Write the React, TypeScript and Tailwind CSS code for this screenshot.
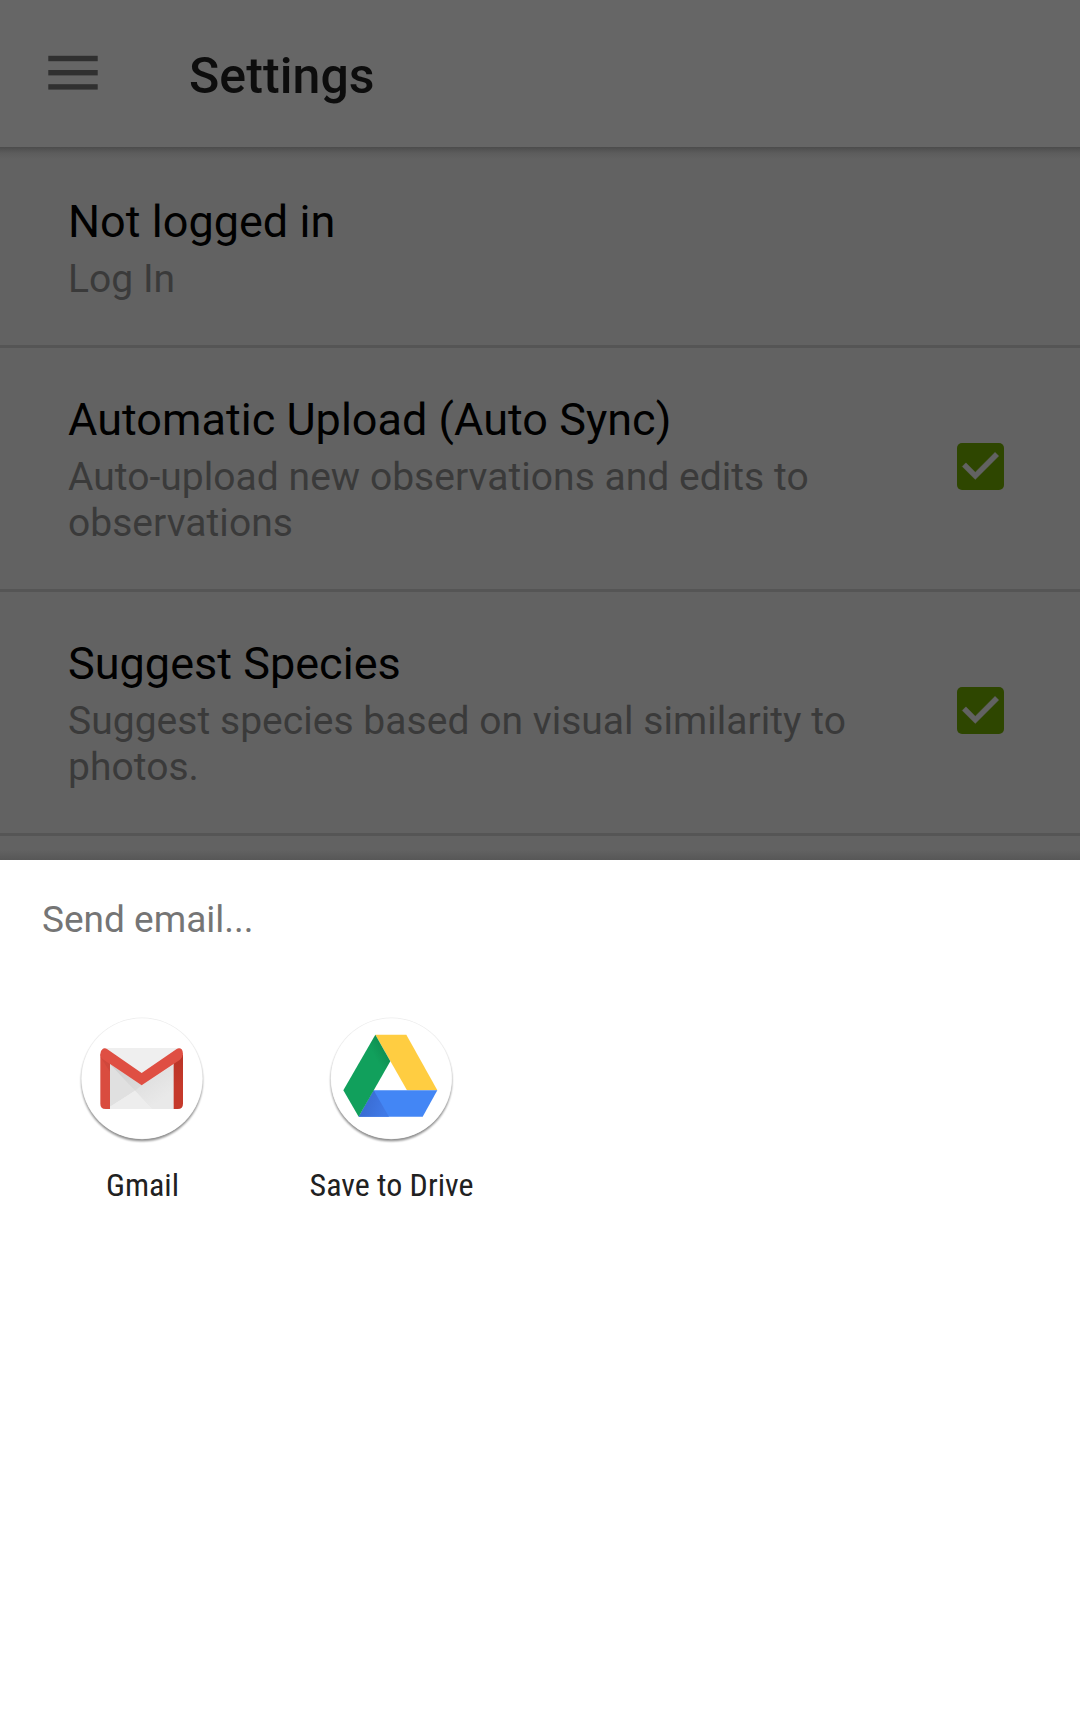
import React from "react";

type Pref = { title: string; summary: string; checked?: boolean };

const prefs: Pref[] = [
  { title: "Not logged in", summary: "Log In" },
  {
    title: "Automatic Upload (Auto Sync)",
    summary: "Auto-upload new observations and edits to observations",
    checked: true,
  },
  {
    title: "Suggest Species",
    summary: "Suggest species based on visual similarity to photos.",
    checked: true,
  },
];

function MenuIcon() {
  return (
    <svg className="h-[35px] w-[50px]" viewBox="0 0 50 35" fill="#303030">
      <rect x="0.3" y="0.8" width="49.4" height="5.4" />
      <rect x="0.3" y="15" width="49.4" height="5.4" />
      <rect x="0.3" y="29.2" width="49.4" height="5.4" />
    </svg>
  );
}

function Checkbox() {
  return (
    <span className="mt-[50px] block size-[47px] shrink-0 rounded-[5px] bg-[#2e4600]">
      <svg className="size-[47px]" viewBox="3 3 18 18" fill="#626262" stroke="#626262" strokeWidth="0.15">
        <path d="M10 17l-5-5 1.41-1.41L10 14.17l7.59-7.59L19 8z" />
      </svg>
    </span>
  );
}

function PrefRow({ title, summary, checked }: Pref) {
  return (
    <li className="flex border-b-[3px] border-[#555555] pt-[45px] pr-[76px] pb-[43px] pl-[68px]">
      <div className="w-[889px] pr-[80px]">
        <div className="text-[45px] leading-[53px] tracking-[0.02px] whitespace-nowrap text-black">{title}</div>
        <div className="mt-2 text-[39px] leading-[46px] tracking-[0.035px] text-[#3a3a3a]">{summary}</div>
      </div>
      {checked && <Checkbox />}
    </li>
  );
}

function Disc({ id, cx }: { id: string; cx: number }) {
  return (
    <>
      <defs>
        <filter id={id} x="-10%" y="-10%" width="120%" height="125%">
          <feGaussianBlur stdDeviation="3" />
        </filter>
      </defs>
      <circle cx={cx} cy="227" r="182" fill="#000" opacity="0.45" filter={`url(#${id})`} />
      <circle cx={cx} cy="220" r="182.5" fill="#ececec" />
      <circle cx={cx} cy="220.5" r="181" fill="#fff" />
    </>
  );
}

function GmailIcon() {
  return (
    <svg className="size-[150px]" viewBox="-9 0 450 450">
      <defs>
        <linearGradient id="gm-right" x1="0" y1="0" x2="0" y2="1">
          <stop offset="0" stopColor="#b93427" />
          <stop offset="0.6" stopColor="#c5392b" />
        </linearGradient>
        <linearGradient id="gm-fold" x1="0" y1="0" x2="1" y2="1">
          <stop offset="0" stopColor="#cfcfcf" />
          <stop offset="1" stopColor="#dcdcdc" />
        </linearGradient>
        <linearGradient id="gm-body" x1="0" y1="0" x2="1" y2="1">
          <stop offset="0.3" stopColor="#dcdcdc" />
          <stop offset="0.8" stopColor="#e9e9e9" />
        </linearGradient>
      </defs>
      <Disc id="gm-shadow" cx={216} />
      <rect x="98" y="129" width="234" height="183" fill="#efefef" />
      <path d="M120 178L215 241L312 178V312H246L120 178Z" fill="url(#gm-body)" />
      <path d="M120 178V305L195 257Z" fill="#e0e0e0" />
      <path d="M120 178L215 241L195 257Z" fill="url(#gm-fold)" />
      <path d="M120 312V305L195 257L246 312Z" fill="#ededed" />
      <path d="M91 148H120V312H107Q91 312 91 296Z" fill="#d94c3f" />
      <path d="M91 155L120 178V200L98 166Z" fill="#cf483c" />
      <path d="M311 165L339 148V296Q339 312 323 312H311Z" fill="url(#gm-right)" />
      <path d="M98 132Q104 128 111 132L215 204L320 132Q328 127 335 133Q339 138 339 147Q338 158 330 164L215 241L101 164Q91 158 91 147Q91 137 98 132Z" fill="#df4f43" />
    </svg>
  );
}

function DriveIcon() {
  return (
    <svg className="size-[150px]" viewBox="-11 0 450 450">
      <defs>
        <linearGradient id="dr-green" x1="0" y1="1" x2="1" y2="0">
          <stop offset="0.7" stopColor="#11a05c" />
          <stop offset="1" stopColor="#0d8048" />
        </linearGradient>
        <linearGradient id="dr-blue" x1="0" y1="0" x2="1" y2="0.3">
          <stop offset="0" stopColor="#3767cb" />
          <stop offset="1" stopColor="#4079e6" />
        </linearGradient>
      </defs>
      <Disc id="dr-shadow" cx={215} />
      <path d="M167 89H260L353 256H262Z" fill="#ffcd41" />
      <path d="M162 256H353L309 335H117Z" fill="#4386f5" />
      <path d="M162 256L208 335H117Z" fill="url(#dr-blue)" />
      <path d="M167 89L212 169L117 335L71 256Z" fill="url(#dr-green)" />
    </svg>
  );
}

function ShareTarget({ label, children }: { label: string; children: React.ReactNode }) {
  return (
    <button className="flex w-[249px] flex-col items-center">
      {children}
      <span className="mt-[11px] pl-[2px] text-[32px] leading-[38px] whitespace-nowrap text-[#212121] [font-stretch:75%]">
        {label}
      </span>
    </button>
  );
}

export default function App() {
  return (
    <div className="h-[1731px] w-[1080px] overflow-hidden bg-white font-['Roboto',sans-serif]">
      <div className="flex h-[860px] flex-col bg-[#626262]">
        <header className="flex h-[147px] shrink-0 items-start bg-[#666666] pl-12">
          <span className="mt-[55px]">
            <MenuIcon />
          </span>
          <h1 className="mt-[46px] ml-[91px] text-[50px] leading-[60px] font-medium tracking-[0.08px] text-[#0d0d0d]">Settings</h1>
        </header>
        <div className="-mb-[9px] h-3 shrink-0 bg-linear-to-b from-[#4c4c4c] via-[#5c5c5c] to-[#626262]" />
        <ul>
          {prefs.map((p) => (
            <PrefRow key={p.title} {...p} />
          ))}
        </ul>
        <div className="mt-auto h-[10px] bg-linear-to-b from-[#626262] to-[#575757]" />
      </div>
      <section className="bg-white">
        <h2 className="pt-[38px] pl-[42px] text-[37px] leading-[44px] text-[#757575]">Send email...</h2>
        <div className="mt-[63px] flex pl-[17px]">
          <ShareTarget label="Gmail">
            <GmailIcon />
          </ShareTarget>
          <ShareTarget label="Save to Drive">
            <DriveIcon />
          </ShareTarget>
        </div>
      </section>
    </div>
  );
}
